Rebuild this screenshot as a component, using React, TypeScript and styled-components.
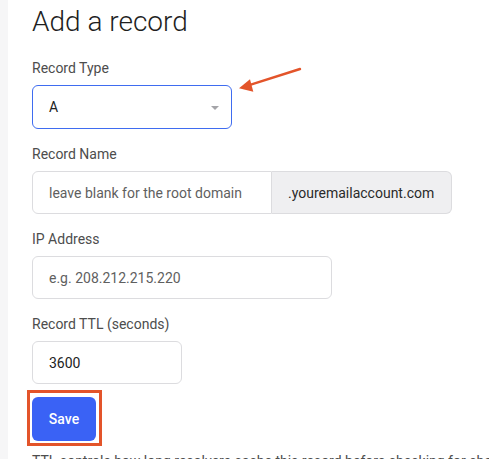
import React from "react";
import styled, { createGlobalStyle } from "styled-components";

const GlobalStyle = createGlobalStyle`
  html, body {
    margin: 0;
    padding: 0;
    background: #ffffff;
    font-family: Roboto, "Liberation Sans", Arial, sans-serif;
  }
`;

const Page = styled.div`
  position: relative;
  display: flex;
  height: 459px;
  overflow: hidden;
`;

const SideStrip = styled.div`
  width: 8px;
  flex-shrink: 0;
  background: #f6f6f7;
`;

const Main = styled.main`
  flex: 1;
  padding: 5px 0 0 24px;
`;

const Title = styled.h1`
  margin: 0 0 19px;
  font-size: 28px;
  line-height: 34px;
  font-weight: 300;
  color: #1f1f1f;
`;

const Field = styled.div`
  margin-bottom: 15px;
`;

const Label = styled.label`
  display: block;
  font-size: 14px;
  line-height: 20px;
  color: #4d4d4d;
  margin-bottom: 7px;
`;

const Row = styled.div`
  display: flex;
`;

const Input = styled.input<{ $width: number; $joined?: boolean }>`
  box-sizing: border-box;
  width: ${(p) => p.$width}px;
  height: 43px;
  padding: 0 16px;
  border: 1px solid #dcdcdf;
  border-radius: ${(p) => (p.$joined ? "6px 0 0 6px" : "6px")};
  font-family: inherit;
  font-size: 14px;
  color: #222;
  background: #fff;
  outline: none;

  &::placeholder {
    color: #5f5f5f;
  }
`;

const Addon = styled.div`
  box-sizing: border-box;
  width: 180px;
  height: 43px;
  display: flex;
  align-items: center;
  padding: 0 16px;
  background: #efeff1;
  border: 1px solid #dcdcdf;
  border-left: none;
  border-radius: 0 6px 6px 0;
  font-size: 14px;
  color: #2a2a2a;
`;

const Select = styled.div`
  box-sizing: border-box;
  width: 200px;
  height: 44px;
  display: flex;
  align-items: center;
  justify-content: space-between;
  padding: 0 12px 0 16px;
  border: 1px solid #3f6cf0;
  border-radius: 6px;
  font-size: 14px;
  color: #222;
`;

const Caret = styled.span`
  width: 0;
  height: 0;
  border-left: 4px solid transparent;
  border-right: 4px solid transparent;
  border-top: 4px solid #a4a4a8;
  margin-top: 1px;
`;

const SaveButton = styled.button`
  position: relative;
  margin-top: -2px;
  width: 64px;
  height: 44px;
  border: none;
  border-radius: 6px;
  background: #3a62f5;
  color: #fff;
  font-family: inherit;
  font-size: 14px;
  font-weight: 500;
  cursor: pointer;

  /* highlight frame drawn around the button */
  &::after {
    content: "";
    position: absolute;
    top: -7px;
    left: -5px;
    right: -6px;
    bottom: -5px;
    border: 3px solid #e3542a;
    pointer-events: none;
  }
`;

const Hint = styled.p`
  margin: 10px 0 0;
  font-size: 14px;
  line-height: 20px;
  color: #4d4d4d;
  white-space: nowrap;
`;

const Pointer = styled.svg`
  position: absolute;
  left: 232px;
  top: 62px;
  pointer-events: none;
`;

export default function App() {
  return (
    <>
      <GlobalStyle />
      <Page>
        <SideStrip />
        <Main>
          <Title>Add a record</Title>

          <Field>
            <Label>Record Type</Label>
            <Select>
              <span>A</span>
              <Caret />
            </Select>
          </Field>

          <Field>
            <Label>Record Name</Label>
            <Row>
              <Input $width={240} $joined placeholder="leave blank for the root domain" />
              <Addon>.youremailaccount.com</Addon>
            </Row>
          </Field>

          <Field>
            <Label>IP Address</Label>
            <Input $width={300} placeholder="e.g. 208.212.215.220" />
          </Field>

          <Field>
            <Label>Record TTL (seconds)</Label>
            <Input $width={150} defaultValue="3600" />
          </Field>

          <SaveButton>Save</SaveButton>
          <Hint>TTL controls how long resolvers cache this record before checking for changes.</Hint>
        </Main>

        <Pointer width="76" height="36" viewBox="0 0 76 36">
          <line x1="68" y1="7" x2="18" y2="22.8" stroke="#e3542a" strokeWidth="2.4" strokeLinecap="round" />
          <polygon points="7,26.3 18,17.3 21.3,29.7" fill="#e3542a" />
        </Pointer>
      </Page>
    </>
  );
}
